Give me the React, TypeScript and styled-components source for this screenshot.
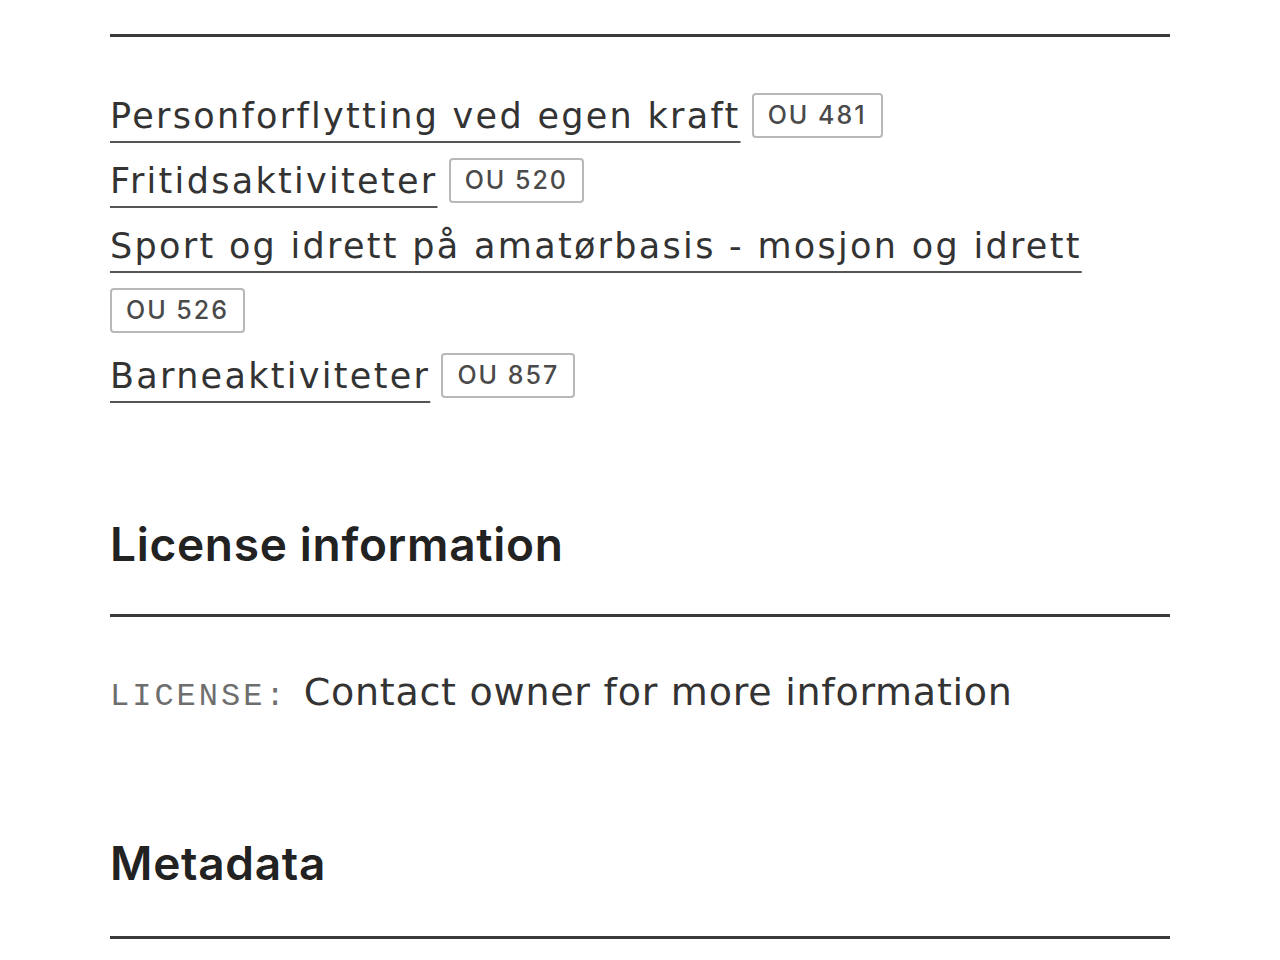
import React from "react";
import styled, { createGlobalStyle } from "styled-components";

const GlobalStyle = createGlobalStyle`
  body {
    margin: 0;
    background: #ffffff;
    font-family: "DejaVu Sans", "Inter", sans-serif;
    color: #333333;
  }
`;

const SUBJECTS = [
  { name: "Personforflytting ved egen kraft", code: "OU 481" },
  { name: "Fritidsaktiviteter", code: "OU 520" },
  { name: "Sport og idrett på amatørbasis - mosjon og idrett", code: "OU 526" },
  { name: "Barneaktiviteter", code: "OU 857" },
];

export default function App() {
  return (
    <>
      <GlobalStyle />
      <Page>
        <Rule />
        <SubjectList>
          {SUBJECTS.map((subject) => (
            <SubjectItem key={subject.code}>
              <SubjectLink href="#">{subject.name}</SubjectLink>{" "}
              <Code>{subject.code}</Code>
            </SubjectItem>
          ))}
        </SubjectList>

        <SectionTitle>License information</SectionTitle>
        <Rule />
        <LicenseRow>
          <LicenseLabel>LICENSE:</LicenseLabel>
          <LicenseValue>Contact owner for more information</LicenseValue>
        </LicenseRow>

        <SectionTitle $gap={118} $after={43}>
          Metadata
        </SectionTitle>
        <Rule />
      </Page>
    </>
  );
}

const Page = styled.main`
  width: 1060px;
  margin: 0 auto;
  padding-top: 34px;
  display: flex;
  flex-direction: column;
`;

const Rule = styled.hr`
  width: 100%;
  height: 3px;
  margin: 0;
  border: 0;
  background: #3a3a3a;
`;

const SubjectList = styled.ul`
  list-style: none;
  margin: 47px 0 0;
  padding: 0;
`;

const SubjectItem = styled.li`
  font-size: 35px;
  line-height: 65px;
`;

const SubjectLink = styled.a`
  color: #333333;
  letter-spacing: 2.3px;
  text-decoration: underline;
  text-decoration-thickness: 2px;
  text-underline-offset: 13px;
  text-decoration-color: #555555;
`;

const Code = styled.span`
  display: inline-block;
  padding: 0 14px;
  height: 41px;
  line-height: 41px;
  border: 2px solid #b8b8b8;
  border-radius: 4px;
  font-family: "Inter", sans-serif;
  font-size: 25px;
  font-weight: 500;
  letter-spacing: 2px;
  color: #4a4a4a;
  vertical-align: 4px;
`;

const SectionTitle = styled.h2<{ $gap?: number; $after?: number }>`
  margin: ${({ $gap }) => $gap ?? 105}px 0 ${({ $after }) => $after ?? 40}px;
  font-family: "Inter", sans-serif;
  font-size: 46px;
  font-weight: 600;
  letter-spacing: 0.7px;
  line-height: 60px;
  color: #222222;
`;

const LicenseRow = styled.p`
  margin: 53px 0 0;
  display: flex;
  align-items: baseline;
  gap: 16px;
`;

const LicenseLabel = styled.span`
  font-family: "Liberation Mono", monospace;
  font-size: 32px;
  letter-spacing: 3px;
  color: #6e6e6e;
`;

const LicenseValue = styled.span`
  font-size: 38px;
  letter-spacing: 0.75px;
  color: #333333;
`;
